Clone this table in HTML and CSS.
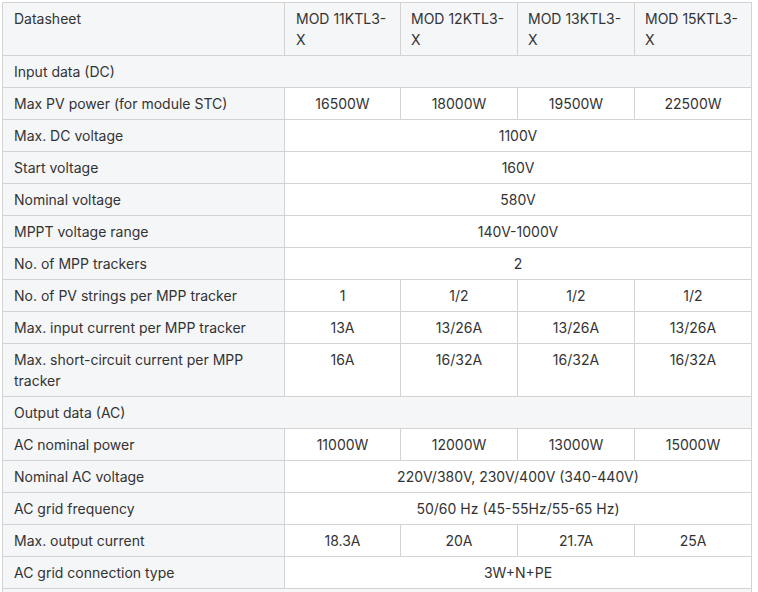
FILE: index.html
```html
<!DOCTYPE html>
<html lang="en">
<head>
<meta charset="utf-8">
<title>Datasheet</title>
<link rel="stylesheet" href="styles.css">
</head>
<body>
<table class="spec">
  <colgroup>
    <col class="c-label">
    <col class="c-first">
    <col class="c-val">
    <col class="c-val">
    <col class="c-val">
  </colgroup>
  <thead>
    <tr class="head">
      <th class="lead">Datasheet</th>
      <th class="lead">MOD 11KTL3-X</th>
      <th>MOD 12KTL3-X</th>
      <th>MOD 13KTL3-X</th>
      <th>MOD 15KTL3-X</th>
    </tr>
  </thead>
  <tbody>
    <tr class="section"><td colspan="5">Input data (DC)</td></tr>
    <tr><td class="lbl">Max PV power (for module STC)</td><td>16500W</td><td>18000W</td><td>19500W</td><td>22500W</td></tr>
    <tr><td class="lbl">Max. DC voltage</td><td colspan="4">1100V</td></tr>
    <tr><td class="lbl">Start voltage</td><td colspan="4">160V</td></tr>
    <tr><td class="lbl">Nominal voltage</td><td colspan="4">580V</td></tr>
    <tr><td class="lbl">MPPT voltage range</td><td colspan="4">140V-1000V</td></tr>
    <tr><td class="lbl">No. of MPP trackers</td><td colspan="4">2</td></tr>
    <tr><td class="lbl">No. of PV strings per MPP tracker</td><td>1</td><td>1/2</td><td>1/2</td><td>1/2</td></tr>
    <tr><td class="lbl">Max. input current per MPP tracker</td><td>13A</td><td>13/26A</td><td>13/26A</td><td>13/26A</td></tr>
    <tr><td class="lbl">Max. short-circuit current per MPP tracker</td><td>16A</td><td>16/32A</td><td>16/32A</td><td>16/32A</td></tr>
    <tr class="section"><td colspan="5">Output data (AC)</td></tr>
    <tr><td class="lbl">AC nominal power</td><td>11000W</td><td>12000W</td><td>13000W</td><td>15000W</td></tr>
    <tr><td class="lbl">Nominal AC voltage</td><td colspan="4">220V/380V, 230V/400V (340-440V)</td></tr>
    <tr><td class="lbl">AC grid frequency</td><td colspan="4">50/60 Hz (45-55Hz/55-65 Hz)</td></tr>
    <tr><td class="lbl">Max. output current</td><td>18.3A</td><td>20A</td><td>21.7A</td><td>25A</td></tr>
    <tr><td class="lbl">AC grid connection type</td><td colspan="4">3W+N+PE</td></tr>
    <tr class="section"><td class="empty" colspan="5"></td></tr>
  </tbody>
</table>
</body>
</html>
```
FILE: styles.css
```css
html, body {
  margin: 0;
  padding: 0;
  background: #ffffff;
}
body {
  padding: 2px 0 0 2px;
  font-family: Inter, "Noto Sans", "Liberation Sans", sans-serif;
  font-size: 14px;
  color: #333333;
}
.spec {
  border-collapse: collapse;
  table-layout: fixed;
  width: 750px;
}
.c-label { width: 282px; }
.c-first { width: 116px; }
.c-val { width: 117px; }
.spec th,
.spec td {
  border: 1px solid #d3d3d3;
  padding: 5px 10px;
  line-height: 21px;
  vertical-align: top;
  text-align: center;
  font-weight: 400;
  background: #ffffff;
}
.spec .head th {
  background: #f5f6f8;
  text-align: left;
}
.spec .head th.lead {
  padding-left: 11px;
  padding-right: 9px;
}
.spec .section td {
  background: #f5f6f8;
  text-align: left;
  padding-left: 11px;
}
.spec td.empty {
  height: 21px;
}
.spec td.lbl {
  background: #f5f6f8;
  text-align: left;
  padding-left: 11px;
  padding-right: 9px;
}
```
